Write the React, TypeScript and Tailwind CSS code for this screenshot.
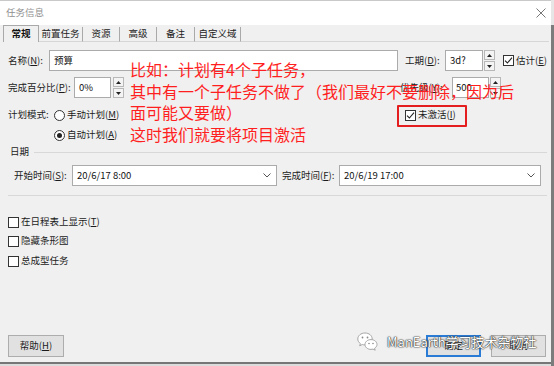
import React from "react";

const Spin = ({ className = "" }: { className?: string }) => (
  <div className={`flex flex-col w-[11px] h-[21px] gap-[1px] ${className}`}>
    <div className="flex-1 border border-[#b8b8b8] bg-[#f4f4f4] flex items-center justify-center">
      <svg width="5" height="3" viewBox="0 0 5 3">
        <path d="M0 3 L2.5 0 L5 3Z" fill="#222" />
      </svg>
    </div>
    <div className="flex-1 border border-[#b8b8b8] bg-[#f4f4f4] flex items-center justify-center">
      <svg width="5" height="3" viewBox="0 0 5 3">
        <path d="M0 0 L2.5 3 L5 0Z" fill="#222" />
      </svg>
    </div>
  </div>
);

const Check = ({ checked = false, className = "" }: { checked?: boolean; className?: string }) => (
  <div className={`w-[11px] h-[11px] border border-[#333] bg-white flex items-center justify-center shrink-0 ${className}`}>
    {checked && (
      <svg width="9" height="9" viewBox="0 0 9 9">
        <path d="M1 4.6 L3.4 7 L8 1.6" fill="none" stroke="#222" strokeWidth="1.1" />
      </svg>
    )}
  </div>
);

const Radio = ({ checked = false, className = "" }: { checked?: boolean; className?: string }) => (
  <div className={`w-[11px] h-[11px] rounded-full border border-[#333] bg-white flex items-center justify-center shrink-0 ${className}`}>
    {checked && <div className="w-[5px] h-[5px] rounded-full bg-[#222]" />}
  </div>
);

const Chevron = () => (
  <svg width="8" height="5" viewBox="0 0 8 5">
    <polyline points="0.5,0.5 4,4 7.5,0.5" fill="none" stroke="#555" strokeWidth="1" />
  </svg>
);

const Tab = ({ label, w }: { label: string; w: string }) => (
  <div className={`${w} mt-[2px] border-r border-b border-[#a9a9a9] border-b-[#d6d6d6] flex items-center justify-center text-[#222]`}>
    {label}
  </div>
);

export default function App() {
  return (
    <div className="w-[554px] h-[366px] flex overflow-hidden bg-[#f0f0f0] relative font-['Noto_Sans_CJK_SC',sans-serif] text-[9.5px] text-[#1b1b1b] leading-none">
      <div className="w-[551px] flex flex-col">
        <div className="h-[1px] bg-[#c9c9c9]" />
        <div className="h-[24px] bg-white flex items-center justify-between pl-[6px] pr-[5px]">
          <span className="text-[#8f8f8f]">任务信息</span>
          <svg width="10" height="10" viewBox="0 0 10 10">
            <path d="M0.5 0.5 L9.5 9.5 M9.5 0.5 L0.5 9.5" stroke="#777" strokeWidth="1" />
          </svg>
        </div>
        {/* tabs */}
        <div className="h-[17px] flex items-stretch pl-[3px]">
          <div className="w-[36px] border-l border-t border-r border-[#a9a9a9] flex items-center justify-center font-semibold text-[#111]">
            常规
          </div>
          <Tab label="前置任务" w="w-[44px]" />
          <Tab label="资源" w="w-[37px]" />
          <Tab label="高级" w="w-[37px]" />
          <Tab label="备注" w="w-[38px]" />
          <Tab label="自定义域" w="w-[46px]" />
          <div className="flex-1 border-b border-[#d6d6d6] mr-[2px]" />
        </div>
        {/* panel */}
        <div className="flex-1 flex flex-col">
          {/* row1 */}
          <div className="flex items-center h-[21px] mt-[8px] pl-[8px]">
            <span className="w-[41px]">名称(<u>N</u>):</span>
            <div className="w-[349px] h-full bg-white border border-[#ababab] flex items-center pl-[4px] text-[#111]">预算</div>
            <span className="ml-[7px] w-[40px]">工期(<u>D</u>):</span>
            <div className="w-[38px] h-full bg-white border border-[#ababab] flex items-center pl-[4px] text-[#111]">3d?</div>
            <Spin className="ml-[1px]" />
            <Check checked className="ml-[8px]" />
            <span className="ml-[2px]">估计(<u>E</u>)</span>
          </div>
          {/* row2 */}
          <div className="flex items-center h-[21px] mt-[6px] pl-[8px]">
            <span className="w-[66px]">完成百分比(<u>P</u>):</span>
            <div className="w-[37px] h-full bg-white border border-[#ababab] flex items-center pl-[4px] text-[#111]">0%</div>
            <Spin className="ml-[2px]" />
            <span className="ml-[276px] w-[52px]">优先级(<u>Y</u>):</span>
            <div className="w-[37px] h-full bg-white border border-[#ababab] flex items-center pl-[3px] text-[#111]">500</div>
            <Spin className="ml-[1px]" />
          </div>
          {/* row3 */}
          <div className="flex items-center h-[12px] mt-[11px] pl-[8px]">
            <span className="w-[46px]">计划模式:</span>
            <Radio />
            <span className="ml-[2px] w-[53px]">手动计划(<u>M</u>)</span>
            <Check checked className="ml-[285px]" />
            <span className="ml-[2px]">未激活(<u>I</u>)</span>
          </div>
          {/* row4 */}
          <div className="flex items-center h-[12px] mt-[8px] pl-[54px]">
            <Radio checked />
            <span className="ml-[2px]">自动计划(<u>A</u>)</span>
          </div>
          {/* date group */}
          <div className="flex items-center h-[12px] mt-[5px] pl-[10px]">
            <span>日期</span>
            <div className="flex-1 ml-[5px] mr-[4px] border-t border-[#d8d8d8]" />
          </div>
          <div className="flex items-center h-[21px] mt-[7px]">
            <span className="ml-[14px] w-[58px]">开始时间(<u>S</u>):</span>
            <div className="w-[205px] h-full bg-white border border-[#ababab] flex items-center justify-between pl-[4px] pr-[5px] text-[#111]">
              <span>20/6/17 8:00</span>
              <Chevron />
            </div>
            <span className="ml-[5px] w-[57px]">完成时间(<u>F</u>):</span>
            <div className="w-[202px] h-full bg-white border border-[#ababab] flex items-center justify-between pl-[4px] pr-[5px] text-[#111]">
              <span>20/6/19 17:00</span>
              <Chevron />
            </div>
          </div>
          <div className="mt-[9px] ml-[8px] w-[539px] border-t border-[#d8d8d8]" />
          {/* checkboxes */}
          <div className="flex items-center h-[14px] mt-[19px] pl-[8px]">
            <Check />
            <span className="ml-[2px]">在日程表上显示(<u>T</u>)</span>
          </div>
          <div className="flex items-center h-[14px] mt-[5px] pl-[8px]">
            <Check />
            <span className="ml-[2px]">隐藏条形图</span>
          </div>
          <div className="flex items-center h-[14px] mt-[6px] pl-[8px]">
            <Check />
            <span className="ml-[2px]">总成型任务</span>
          </div>
        </div>
        {/* footer */}
        <div className="h-[22px] flex items-stretch pl-[8px] pr-[5px]">
          <div className="w-[56px] bg-[#e1e1e1] border border-[#adadad] flex items-center justify-center">帮助(<u>H</u>)</div>
          <div className="ml-auto w-[55px] bg-[#e1e1e1] border-2 border-[#2a7bd5] flex items-center justify-center">确定</div>
          <div className="ml-[10px] w-[55px] bg-[#e1e1e1] border border-[#adadad] flex items-center justify-center">取消</div>
        </div>
        <div className="h-[5px]" />
        <div className="h-[4px] flex flex-col">
          <div className="h-[2px] bg-[#767676]" />
          <div className="h-[2px] bg-[#dcdcdc]" />
        </div>
      </div>
      <div className="w-[3px] flex flex-col">
        <div className="h-[25px] bg-[#e6e6e6]" />
        <div className="flex-1 bg-[#7c7c7c]" />
      </div>

      {/* red annotation */}
      <div className="absolute left-[130px] top-[59px] text-[16px] leading-[21.5px] text-[#ff1f1f] whitespace-nowrap">
        <div>比如：计划有4个子任务，</div>
        <div>其中有一个子任务不做了（我们最好不要删除，因为后</div>
        <div>面可能又要做）</div>
        <div>这时我们就要将项目激活</div>
      </div>
      <div className="absolute left-[397px] top-[105px] w-[70px] h-[22px] border-2 border-[#e41e1e] rounded-[1px]" />

      {/* watermark */}
      <div className="absolute left-[357px] top-[332px] flex items-center">
        <svg width="21" height="19" viewBox="0 0 21 19">
          <path d="M8 1 C3.8 1 0.8 3.7 0.8 7 C0.8 8.9 1.8 10.5 3.4 11.6 L2.7 13.8 L5.3 12.5 C6.2 12.8 7.1 12.9 8 12.9 C12.2 12.9 15.2 10.3 15.2 7 C15.2 3.7 12.2 1 8 1Z" fill="white" stroke="#9c9c9c" strokeWidth="0.9" />
          <path d="M14 7.6 C10.6 7.6 8 9.8 8 12.5 C8 15.2 10.6 17.4 14 17.4 C14.7 17.4 15.4 17.3 16 17.1 L18.2 18.2 L17.6 16.3 C19 15.4 20 14 20 12.5 C20 9.8 17.4 7.6 14 7.6Z" fill="white" stroke="#9c9c9c" strokeWidth="0.9" />
          <circle cx="5.5" cy="5.5" r="0.9" fill="#8a8a8a" />
          <circle cx="10.5" cy="5.5" r="0.9" fill="#8a8a8a" />
          <circle cx="12" cy="11.5" r="0.8" fill="#8a8a8a" />
          <circle cx="16" cy="11.5" r="0.8" fill="#8a8a8a" />
        </svg>
        <span className="ml-[9px] text-[13px] text-white [text-shadow:0_0_1px_#222,0_0_1px_#222,0_0_2px_#444] whitespace-nowrap">ManEarth学习技术杂物社</span>
      </div>
    </div>
  );
}
